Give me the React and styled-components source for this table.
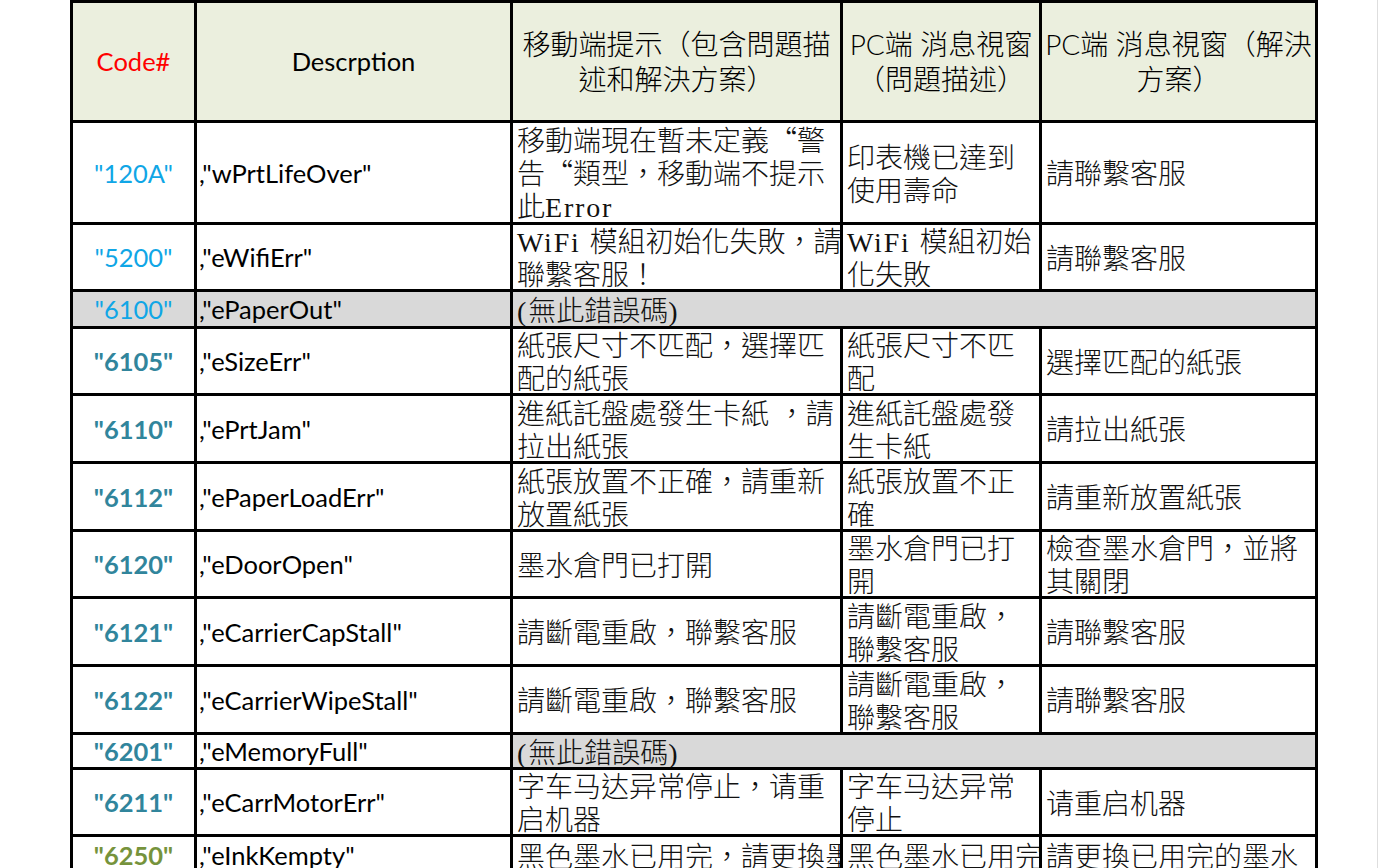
import React from 'react';
import styled, { createGlobalStyle } from 'styled-components';

const GlobalStyle = createGlobalStyle`
  html, body {
    margin: 0;
    background: #fff;
  }
  body {
    overflow: hidden;
  }
`;

const Page = styled.div`
  width: 1378px;
  height: 868px;
  overflow: hidden;
  padding-left: 70px;
  box-sizing: border-box;
  border-right: 1px solid #dedede;
  background: #fff;
`;

const Sheet = styled.div`
  display: flex;
  flex-direction: column;
  gap: 3px;
  width: 1248px;
  padding: 3px;
  box-sizing: border-box;
  background: #000;
`;

const Row = styled.div`
  display: grid;
  grid-template-columns: 121px 313px 327px 196px 273px;
  gap: 3px;
  height: ${(p) => p.$h}px;
  flex-shrink: 0;
`;

const Cell = styled.div`
  display: flex;
  flex-direction: column;
  justify-content: center;
  min-width: 0;
  overflow: hidden;
  white-space: nowrap;
  background: ${(p) => (p.$grey ? '#d9d9d9' : '#fff')};
`;

const HeadCell = styled(Cell)`
  align-items: center;
  text-align: center;
  background: #ebefde;
  color: ${(p) => p.$color || '#000'};
  font-family: ${(p) =>
    p.$cjk
      ? 'Lato, "Noto Sans CJK TC", sans-serif'
      : 'Lato, sans-serif'};
  font-size: ${(p) => (p.$cjk ? 28 : 25.5)}px;
  font-weight: ${(p) => (p.$cjk ? 300 : 400)};
  line-height: 35px;
`;

const CodeCell = styled(Cell)`
  align-items: center;
  font-family: Lato, sans-serif;
  font-size: 25.5px;
  font-weight: ${(p) => (p.$tone === 'light' ? 400 : 700)};
  color: ${(p) =>
    p.$tone === 'light' ? '#10a6e6' : p.$tone === 'olive' ? '#76933c' : '#31859c'};
`;

const DescCell = styled(Cell)`
  padding-left: 2px;
  font-family: Lato, sans-serif;
  font-size: 25.5px;
  color: #000;
`;

const TextCell = styled(Cell)`
  grid-column: ${(p) => (p.$span ? `span ${p.$span}` : 'auto')};
  padding-left: 4px;
  font-family: "Noto Sans CJK TC", sans-serif;
  font-size: 28px;
  font-weight: 300;
  line-height: 33px;
  color: #111;
`;

const Line = styled.div`
  height: 33px;
`;

const Half = styled.span`
  font-family: "Liberation Serif", serif;
  font-size: 28px;
  letter-spacing: 1.8px;
`;

const rows = [
  {
    code: '120A', tone: 'light', desc: 'wPrtLifeOver', h: 99,
    mobile: ['移動端現在暫未定義“警', '告“類型，移動端不提示', '此Error'],
    pc: ['印表機已達到', '使用壽命'],
    fix: ['請聯繫客服'],
  },
  {
    code: '5200', tone: 'light', desc: 'eWifiErr', h: 64,
    mobile: ['WiFi 模組初始化失敗，請', '聯繫客服！'],
    pc: ['WiFi 模組初始', '化失敗'],
    fix: ['請聯繫客服'],
  },
  { code: '6100', tone: 'light', desc: 'ePaperOut', h: 34, none: true, greyAll: true },
  {
    code: '6105', tone: 'teal', desc: 'eSizeErr', h: 64,
    mobile: ['紙張尺寸不匹配，選擇匹', '配的紙張'],
    pc: ['紙張尺寸不匹', '配'],
    fix: ['選擇匹配的紙張'],
  },
  {
    code: '6110', tone: 'teal', desc: 'ePrtJam', h: 65,
    mobile: ['進紙託盤處發生卡紙 ，請', '拉出紙張'],
    pc: ['進紙託盤處發', '生卡紙'],
    fix: ['請拉出紙張'],
  },
  {
    code: '6112', tone: 'teal', desc: 'ePaperLoadErr', h: 65,
    mobile: ['紙張放置不正確，請重新', '放置紙張'],
    pc: ['紙張放置不正', '確'],
    fix: ['請重新放置紙張'],
  },
  {
    code: '6120', tone: 'teal', desc: 'eDoorOpen', h: 64,
    mobile: ['墨水倉門已打開'],
    pc: ['墨水倉門已打', '開'],
    fix: ['檢查墨水倉門，並將', '其關閉'],
  },
  {
    code: '6121', tone: 'teal', desc: 'eCarrierCapStall', h: 65,
    mobile: ['請斷電重啟，聯繫客服'],
    pc: ['請斷電重啟，', '聯繫客服'],
    fix: ['請聯繫客服'],
  },
  {
    code: '6122', tone: 'teal', desc: 'eCarrierWipeStall', h: 65,
    mobile: ['請斷電重啟，聯繫客服'],
    pc: ['請斷電重啟，', '聯繫客服'],
    fix: ['請聯繫客服'],
  },
  { code: '6201', tone: 'teal', desc: 'eMemoryFull', h: 32, none: true },
  {
    code: '6211', tone: 'teal', desc: 'eCarrMotorErr', h: 64,
    mobile: ['字车马达异常停止，请重', '启机器'],
    pc: ['字车马达异常', '停止'],
    fix: ['请重启机器'],
  },
  {
    code: '6250', tone: 'olive', desc: 'eInkKempty', h: 36,
    mobile: ['黑色墨水已用完，請更換墨'],
    pc: ['黑色墨水已用完'],
    fix: ['請更換已用完的墨水'],
  },
];

// ASCII runs use the Latin of the sheet's Ming font
function runs(line) {
  return line
    .split(/([\x20-\x7e]+)/)
    .filter(Boolean)
    .map((t, i) => (/^[\x20-\x7e]+$/.test(t) ? <Half key={i}>{t}</Half> : t));
}

function Lines({ lines }) {
  return lines.map((l, i) => <Line key={i}>{runs(l)}</Line>);
}

export default function App() {
  return (
    <Page>
      <GlobalStyle />
      <Sheet>
        <Row $h={117}>
          <HeadCell $color="#ff0000">Code#</HeadCell>
          <HeadCell>Descrption</HeadCell>
          <HeadCell $cjk>
            <div>移動端提示（包含問題描</div>
            <div>述和解決方案）</div>
          </HeadCell>
          <HeadCell $cjk>
            <div>PC端 消息視窗</div>
            <div>（問題描述）</div>
          </HeadCell>
          <HeadCell $cjk>
            <div>PC端 消息視窗（解決</div>
            <div>方案）</div>
          </HeadCell>
        </Row>
        {rows.map((r) => (
          <Row key={r.code} $h={r.h}>
            <CodeCell $tone={r.tone} $grey={r.greyAll}>"{r.code}"</CodeCell>
            <DescCell $grey={r.greyAll}>,"{r.desc}"</DescCell>
            {r.none ? (
              <TextCell $span={3} $grey>
                <Lines lines={['(無此錯誤碼)']} />
              </TextCell>
            ) : (
              <>
                <TextCell><Lines lines={r.mobile} /></TextCell>
                <TextCell><Lines lines={r.pc} /></TextCell>
                <TextCell><Lines lines={r.fix} /></TextCell>
              </>
            )}
          </Row>
        ))}
      </Sheet>
    </Page>
  );
}
